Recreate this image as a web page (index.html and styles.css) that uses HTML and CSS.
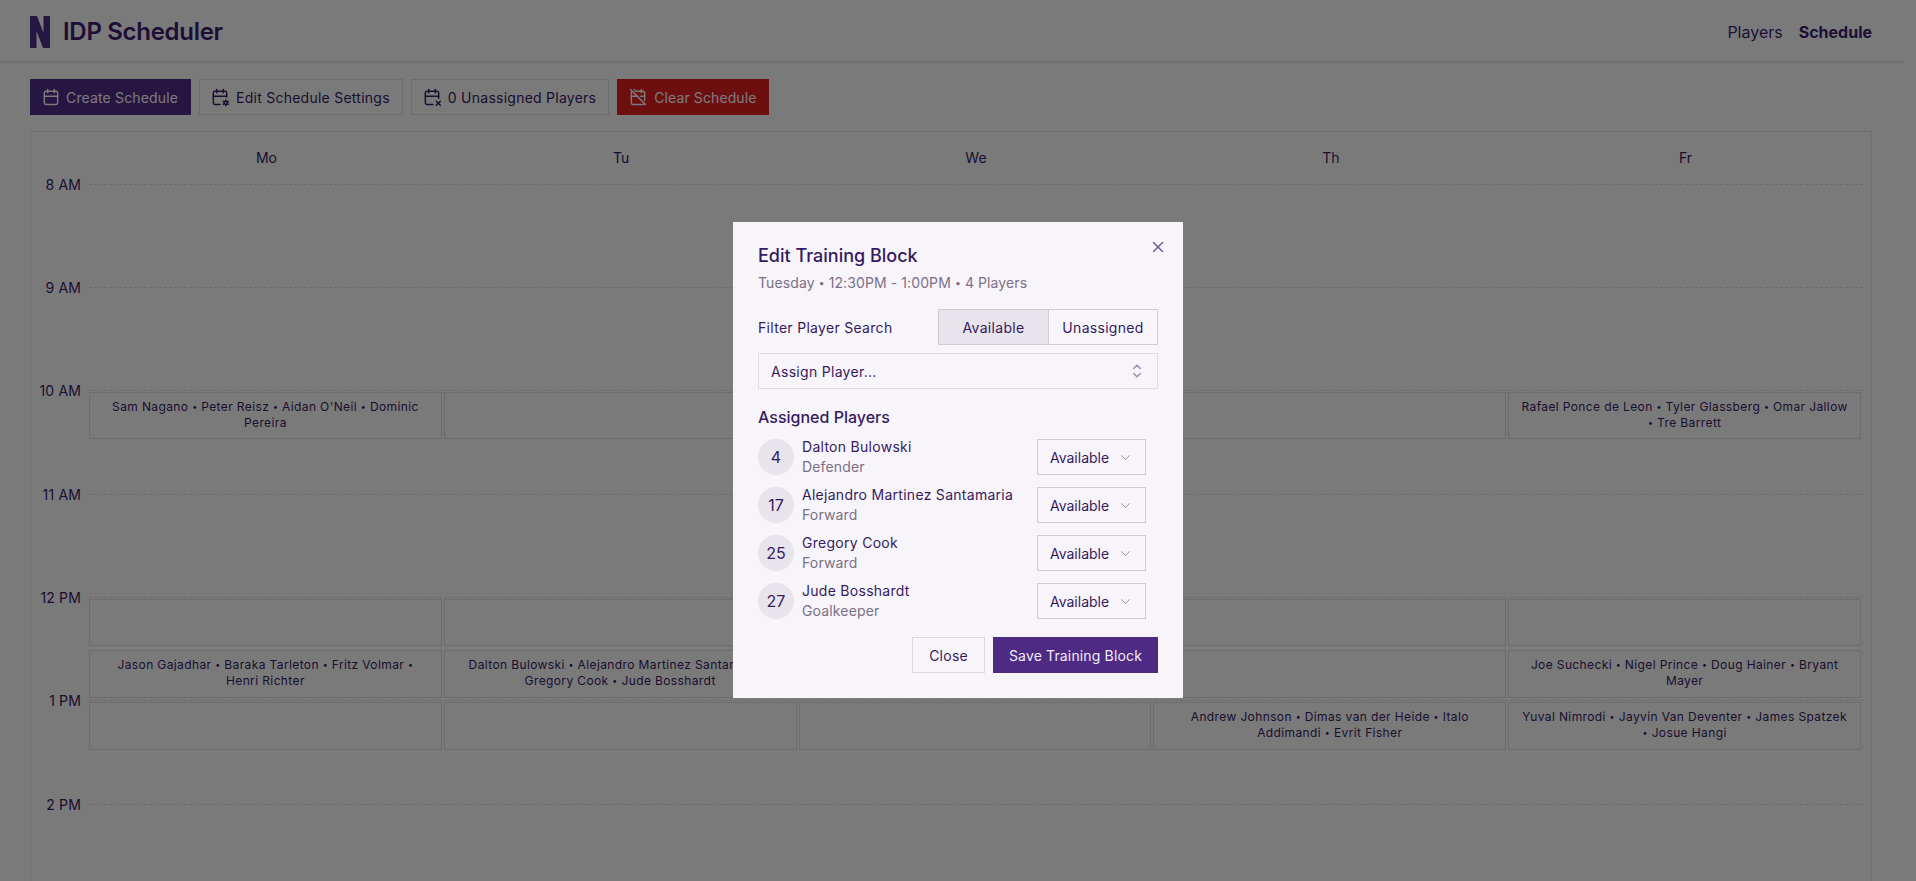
FILE: index.html
```html
<!DOCTYPE html>
<html lang="en">
<head>
<meta charset="utf-8">
<title>IDP Scheduler</title>
<link rel="stylesheet" href="styles.css">
</head>
<body>
<div class="page">
  <header class="topbar">
    <div class="brand">
      <svg class="logo" viewBox="0 0 20 32"><path class="logo-fill" d="M0 0H7L13.5 17V0H20V32H13L6.5 15V32H0Z"/></svg>
      <span class="brand-name">IDP Scheduler</span>
    </div>
    <nav class="nav"><a class="nav-link">Players</a><a class="nav-link nav-active">Schedule</a></nav>
  </header>
  <main class="content">
    <div class="toolbar">
      <button class="btn btn-primary"><svg class="ico" viewBox="0 0 24 24"><path d="M4 7a2 2 0 0 1 2 -2h12a2 2 0 0 1 2 2v12a2 2 0 0 1 -2 2h-12a2 2 0 0 1 -2 -2v-12z"/><path d="M16 3v4"/><path d="M8 3v4"/><path d="M4 11h16"/></svg>Create Schedule</button>
      <button class="btn btn-outline"><svg class="ico" viewBox="0 0 24 24"><path d="M12 21h-6a2 2 0 0 1 -2 -2v-12a2 2 0 0 1 2 -2h12a2 2 0 0 1 2 2v5"/><path d="M16 3v4"/><path d="M8 3v4"/><path d="M4 11h16"/><path d="M17 19a2 2 0 1 0 4 0a2 2 0 1 0 -4 0"/><path d="M19 15.5v1.5"/><path d="M19 21v1.5"/><path d="M22.03 17.25l-1.3 .75"/><path d="M17.27 20l-1.3 .75"/><path d="M15.97 17.25l1.3 .75"/><path d="M20.73 20l1.3 .75"/></svg>Edit Schedule Settings</button>
      <button class="btn btn-outline"><svg class="ico" viewBox="0 0 24 24"><path d="M13 21h-7a2 2 0 0 1 -2 -2v-12a2 2 0 0 1 2 -2h12a2 2 0 0 1 2 2v6.5"/><path d="M16 3v4"/><path d="M8 3v4"/><path d="M4 11h16"/><path d="M22 22l-5 -5"/><path d="M17 22l5 -5"/></svg>0 Unassigned Players</button>
      <button class="btn btn-danger"><svg class="ico" viewBox="0 0 24 24"><path d="M9 5h9a2 2 0 0 1 2 2v9m-.184 3.839a2 2 0 0 1 -1.816 1.161h-12a2 2 0 0 1 -2 -2v-12a2 2 0 0 1 1.158 -1.815"/><path d="M16 3v4"/><path d="M8 3v1"/><path d="M4 11h7m4 0h5"/><path d="M3 3l18 18"/></svg>Clear Schedule</button>
    </div>
    <section class="calendar">
      <div class="days">
        <div class="day">Mo</div><div class="day">Tu</div><div class="day">We</div><div class="day">Th</div><div class="day">Fr</div>
      </div>
      <div class="timeline">
        <div class="hour"><span class="hour-label">8 AM</span></div>
        <div class="hour"><span class="hour-label">9 AM</span></div>
        <div class="hour"><span class="hour-label">10 AM</span></div>
        <div class="hour"><span class="hour-label">11 AM</span></div>
        <div class="hour"><span class="hour-label">12 PM</span></div>
        <div class="hour"><span class="hour-label">1 PM</span></div>
        <div class="hour"><span class="hour-label">2 PM</span></div>
        <div class="blocks">
          <div class="block c1 r10">Sam Nagano <span class="dot">•</span> Peter Reisz <span class="dot">•</span> Aidan O'Neil <span class="dot">•</span> Dominic<br>Pereira</div>
          <div class="block c2 r10"></div>
          <div class="block c4 r10"></div>
          <div class="block c5 r10">Rafael Ponce de Leon <span class="dot">•</span> Tyler Glassberg <span class="dot">•</span> Omar Jallow<br><span class="dot">•</span> Tre Barrett</div>
          <div class="block c1 r12"></div>
          <div class="block c2 r12"></div>
          <div class="block c3 r12"></div>
          <div class="block c4 r12"></div>
          <div class="block c5 r12"></div>
          <div class="block c1 r1230">Jason Gajadhar <span class="dot">•</span> Baraka Tarleton <span class="dot">•</span> Fritz Volmar <span class="dot">•</span><br>Henri Richter</div>
          <div class="block c2 r1230">Dalton Bulowski <span class="dot">•</span> Alejandro Martinez Santamaria <span class="dot">•</span><br>Gregory Cook <span class="dot">•</span> Jude Bosshardt</div>
          <div class="block c3 r1230"></div>
          <div class="block c4 r1230"></div>
          <div class="block c5 r1230">Joe Suchecki <span class="dot">•</span> Nigel Prince <span class="dot">•</span> Doug Hainer <span class="dot">•</span> Bryant<br>Mayer</div>
          <div class="block c1 r13"></div>
          <div class="block c2 r13"></div>
          <div class="block c3 r13"></div>
          <div class="block c4 r13">Andrew Johnson <span class="dot">•</span> Dimas van der Heide <span class="dot">•</span> Italo<br>Addimandi <span class="dot">•</span> Evrit Fisher</div>
          <div class="block c5 r13">Yuval Nimrodi <span class="dot">•</span> Jayvin Van Deventer <span class="dot">•</span> James Spatzek<br><span class="dot">•</span> Josue Hangi</div>
        </div>
      </div>
    </section>
  </main>
</div>
<div class="backdrop">
  <div class="modal" role="dialog">
    <div class="modal-head">
      <h2 class="modal-title">Edit Training Block</h2>
      <svg class="close-x" viewBox="0 0 24 24"><path d="M18 6l-12 12"/><path d="M6 6l12 12"/></svg>
    </div>
    <p class="modal-sub">Tuesday <span class="dot">•</span> 12:30PM - 1:00PM <span class="dot">•</span> 4 Players</p>
    <div class="filter-row">
      <span class="filter-label">Filter Player Search</span>
      <div class="segment"><span class="seg seg-on">Available</span><span class="seg">Unassigned</span></div>
    </div>
    <div class="assign"><span>Assign Player...</span><svg class="sel-ico" viewBox="0 0 24 24"><path d="M8 9l4 -4l4 4"/><path d="M16 15l-4 4l-4 -4"/></svg></div>
    <h3 class="section-title">Assigned Players</h3>
    <div class="players">
      <div class="player"><span class="num">4</span><div class="who"><div class="pname">Dalton Bulowski</div><div class="ppos">Defender</div></div><div class="status">Available<svg class="chev" viewBox="0 0 24 24"><path d="M6 9l6 6l6 -6"/></svg></div></div>
      <div class="player"><span class="num">17</span><div class="who"><div class="pname">Alejandro Martinez Santamaria</div><div class="ppos">Forward</div></div><div class="status">Available<svg class="chev" viewBox="0 0 24 24"><path d="M6 9l6 6l6 -6"/></svg></div></div>
      <div class="player"><span class="num">25</span><div class="who"><div class="pname">Gregory Cook</div><div class="ppos">Forward</div></div><div class="status">Available<svg class="chev" viewBox="0 0 24 24"><path d="M6 9l6 6l6 -6"/></svg></div></div>
      <div class="player"><span class="num">27</span><div class="who"><div class="pname">Jude Bosshardt</div><div class="ppos">Goalkeeper</div></div><div class="status">Available<svg class="chev" viewBox="0 0 24 24"><path d="M6 9l6 6l6 -6"/></svg></div></div>
    </div>
    <div class="modal-actions"><button class="mbtn mbtn-ghost">Close</button><button class="mbtn mbtn-save">Save Training Block</button></div>
  </div>
</div>
</body>
</html>
```

FILE: styles.css
```css
* { box-sizing: border-box; }
html, body { margin: 0; height: 100%; overflow: hidden; }
body { background: #f5f5f5; color: #361a60; font-family: Inter, "Liberation Sans", sans-serif; font-size: 14px; }
.page { width: 1904px; height: 881px; overflow: hidden; }
.topbar { height: 63px; padding: 2px 32px 0 30px; display: flex; align-items: center; justify-content: space-between; border-bottom: 2px solid #e2e2e2; }
.brand { display: flex; align-items: center; gap: 13px; }
.logo { width: 20px; height: 32px; display: block; }
.logo-fill { fill: #4e2a84; }
.brand-name { font-size: 24px; font-weight: 600; line-height: 32px; letter-spacing: -.3px; color: #3c1d6e; }
.nav { display: flex; gap: 16px; font-size: 16px; }
.nav-link { color: #3c1d6e; font-weight: 400; }
.nav-active { font-weight: 700; }
.content { padding: 16px 32px 0 30px; }
.toolbar { display: flex; gap: 8px; }
.btn { height: 36px; padding: 0 12px 0 10px; display: flex; align-items: center; gap: 6px; border: 1px solid #dadada; background: transparent; font: 400 14px Inter, sans-serif; letter-spacing: .25px; color: #361a60; }
.btn-primary { background: #4e2a84; border-color: #4e2a84; color: #f7f5fa; letter-spacing: .15px; gap: 5px; }
.btn-danger { background: #dc1e1e; border-color: #dc1e1e; color: #f7f5fa; letter-spacing: .1px; }
.ico { width: 20px; height: 20px; fill: none; stroke: currentColor; stroke-width: 1.75; stroke-linecap: round; stroke-linejoin: round; flex: none; }
.calendar { margin-top: 16px; height: 760px; border: 1px solid #e0e0e0; padding: 0 8px 0 58px; }
.days { display: grid; grid-template-columns: repeat(5, 1fr); height: 51.5px; align-items: center; }
.day { text-align: center; font-size: 14px; line-height: 20px; }
.timeline { position: relative; }
.hour { height: 103.4px; border-top: 1px dashed #d8d8d8; position: relative; }
.hour-label { position: absolute; right: calc(100% + 8px); top: -10px; line-height: 20px; white-space: nowrap; font-size: 14px; letter-spacing: .15px; }
.blocks { position: absolute; inset: 0; display: grid; grid-template-columns: repeat(5, 1fr); grid-auto-rows: 51.7px; }
.block { margin: 1.5px 2px 2.5px 0; border: 1px solid #dadada; padding: 6px 12px; text-align: center; font-size: 12px; line-height: 16px; letter-spacing: .38px; font-weight: 400; color: #361a60; }
.dot { font-size: .74em; line-height: 1; vertical-align: .1em; }
.c1 { grid-column: 1; } .c2 { grid-column: 2; } .c3 { grid-column: 3; } .c4 { grid-column: 4; } .c5 { grid-column: 5; }
.r10 { grid-row: 5; } .r12 { grid-row: 9; } .r1230 { grid-row: 10; } .r13 { grid-row: 11; }
.backdrop { position: fixed; inset: 0; background: rgba(0,0,0,.5); display: flex; justify-content: center; align-items: flex-start; padding-top: 222px; }
.modal { width: 450px; height: 476px; background: #f7f5fa; padding: 25px; }
.modal-head { display: flex; justify-content: space-between; align-items: flex-start; height: 26px; }
.modal-title { margin: 0; font-size: 18px; font-weight: 500; line-height: 18px; color: #361a60; }
.close-x { width: 18px; height: 18px; margin: -9px -9px 0 0; fill: none; stroke: #6f5a95; stroke-width: 2; stroke-linecap: round; stroke-linejoin: round; }
.modal-sub { margin: 0; line-height: 20px; color: #7b7088; letter-spacing: .1px; }
.filter-row { margin-top: 16px; display: flex; justify-content: space-between; align-items: center; }
.filter-label { font-weight: 400; letter-spacing: .3px; }
.segment { display: flex; border: 1px solid #cfcad6; height: 36px; }
.seg { display: flex; align-items: center; justify-content: center; width: 109px; font-weight: 400; letter-spacing: .3px; }
.seg + .seg { border-left: 1px solid #cfcad6; }
.seg-on { background: #e8e4ec; }
.assign { margin-top: 8px; height: 36px; border: 1px solid #e0dce5; padding: 0 10px 0 12px; display: flex; align-items: center; justify-content: space-between; font-weight: 400; letter-spacing: .3px; }
.sel-ico { width: 20px; height: 20px; fill: none; stroke: #9a8fae; stroke-width: 1.8; stroke-linecap: round; stroke-linejoin: round; }
.section-title { margin: 16px 0 0; font-size: 16px; font-weight: 500; line-height: 24px; }
.players { margin-top: 10px; display: flex; flex-direction: column; gap: 12px; padding-right: 12px; }
.player { display: flex; align-items: center; gap: 8px; height: 36px; }
.num { width: 36px; height: 36px; border-radius: 50%; background: #e8e4ec; display: flex; align-items: center; justify-content: center; font-size: 16px; flex: none; }
.who { flex: 1; }
.pname { line-height: 20px; font-weight: 400; letter-spacing: .28px; }
.ppos { line-height: 20px; color: #7b7088; letter-spacing: .15px; }
.status { width: 109px; height: 36px; border: 1px solid #cfcad6; padding: 0 12px; display: flex; align-items: center; justify-content: space-between; font-weight: 400; letter-spacing: 0; flex: none; }
.chev { width: 15px; height: 15px; fill: none; stroke: #9a8fae; stroke-width: 1.6; stroke-linecap: round; stroke-linejoin: round; }
.modal-actions { margin-top: 18px; display: flex; justify-content: flex-end; gap: 8px; }
.mbtn { height: 36px; font: 400 14px Inter, sans-serif; letter-spacing: .15px; padding: 0 15px; }
.mbtn-ghost { background: transparent; border: 1px solid #dcd8e2; color: #361a60; padding: 0 16px; letter-spacing: .25px; }
.mbtn-save { background: #4e2a84; border: 1px solid #4e2a84; color: #f0ecf6; }
```
